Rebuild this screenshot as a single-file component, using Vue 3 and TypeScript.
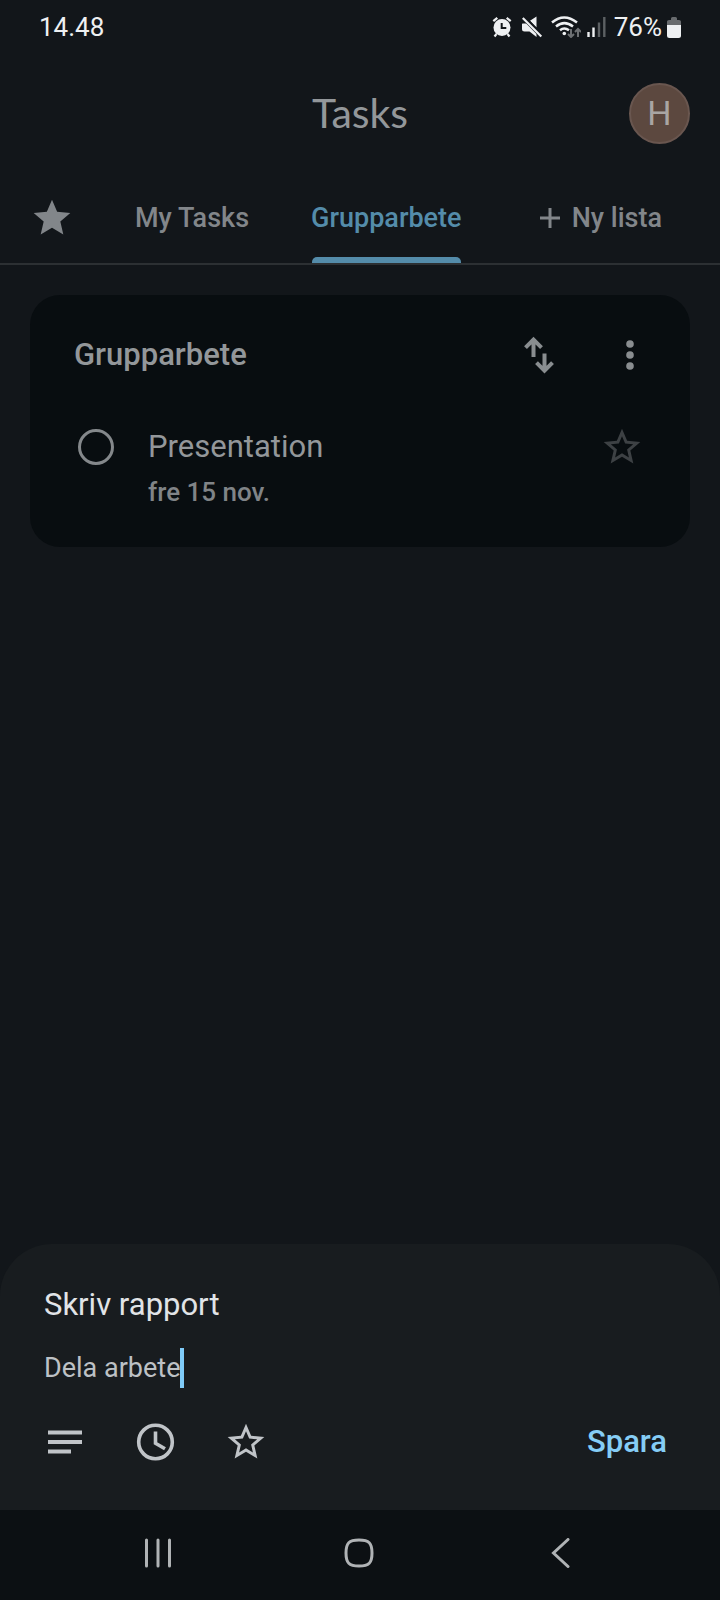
<script setup lang="ts">
import { ref } from 'vue'

interface Task {
  id: number
  title: string
  due: string
  done: boolean
  starred: boolean
}

const lists = ref<string[]>(['My Tasks', 'Grupparbete'])
const activeList = ref<string>('Grupparbete')
const tasks = ref<Task[]>([
  { id: 1, title: 'Presentation', due: 'fre 15 nov.', done: false, starred: false },
])
const newTitle = ref<string>('Skriv rapport')
const newDetails = ref<string>('Dela arbete')

const starPath =
  'M22 9.24l-7.19-.62L12 2 9.19 8.63 2 9.24l5.46 4.73L5.82 21 12 17.27 18.18 21l-1.63-7.03L22 9.24zM12 15.4l-3.76 2.27 1-4.28-3.32-2.88 4.38-.38L12 6.1l1.71 4.04 4.38.38-3.32 2.88 1 4.28L12 15.4z'
</script>

<template>
  <div class="app">
    <div class="status">
      <span>14.48</span>
      <div class="status-icons">
        <svg class="alarm" width="20" height="22" viewBox="0 0 20 22">
          <circle cx="10" cy="11.500" r="8.500" fill="currentColor" />
          <path d="M1.300 5.200 5.300 1.800M18.700 5.200 14.700 1.800M4.500 18 2.500 20.500M15.500 18l2 2.500" stroke="currentColor" stroke-width="2.200" fill="none" />
          <path d="M9.700 7v5h4.600" stroke="#12161a" stroke-width="2" fill="none" />
        </svg>
        <svg class="mute" width="22" height="22" viewBox="0 0 22 22">
          <path d="M1.500 7.500h4L15.500 17v4L8.500 15.500h-5Q1 15.500 1 13V8zM9 4.800 15.500 .5V11.500z" fill="currentColor" />
          <path d="M2.500 1.500 20.500 20" stroke="#12161a" stroke-width="4.500" />
          <path d="M1.800 2 20.300 20.500" stroke="currentColor" stroke-width="2.200" />
        </svg>
        <svg class="wifi" width="30" height="22" viewBox="0 0 30 22">
          <g fill="none" stroke="currentColor" stroke-width="2.500">
            <path d="M1 6.500Q13 -3.500 26 6.500" />
            <path d="M5 10.500Q13.300 3.700 22 10.500" />
            <path d="M9 14.300Q13.300 10.700 18 14.300" />
          </g>
          <circle cx="13.300" cy="17.500" r="1.800" fill="currentColor" />
          <path d="M20 13v8M17 18l3 3 3-3M27 21v-8M24 16l3-3 3 3" stroke="#6d7073" stroke-width="2" fill="none" />
        </svg>
        <svg class="signal" width="19" height="20" viewBox="0 0 19 20">
          <path d="M1.500 15v5M6.500 10.500V20" stroke="currentColor" stroke-width="2.400" />
          <path d="M12 5.500V20M17.300 0v20" stroke="#5c6063" stroke-width="2.400" />
        </svg>
        <span class="percent">76%</span>
        <svg class="battery" width="14" height="21" viewBox="0 0 14 21">
          <path d="M0 8V4.500Q0 3 2 3h2V1.500Q4 0 5.500 0h3Q10 0 10 1.500V3h2q2 0 2 1.500V8z" fill="#686b6e" />
          <path d="M0 8h14v10.500q0 2.500-2.500 2.500h-9Q0 21 0 18.500z" fill="currentColor" />
        </svg>
      </div>
    </div>

    <header class="top">
      <h1>Tasks</h1>
      <button class="avatar" type="button" aria-label="Konto">H</button>
    </header>

    <nav class="tabs" aria-label="Listor">
      <button class="tab star-tab" type="button" aria-label="Stjärnmärkta">
        <svg class="icon" viewBox="0 0 24 24">
          <path d="M12 17.270 18.180 21l-1.640-7.030L22 9.240l-7.190-.610L12 2 9.190 8.630 2 9.240l5.460 4.730L5.820 21z" fill="currentColor" />
        </svg>
      </button>
      <button
        v-for="name in lists"
        :key="name"
        type="button"
        class="tab"
        :class="{ active: name === activeList }"
        @click="activeList = name"
      >
        {{ name }}
      </button>
      <button class="tab new-list" type="button">
        <svg width="20" height="20" viewBox="0 0 20 20">
          <path d="M10 0v20M0 10h20" stroke="currentColor" stroke-width="3" />
        </svg>
        Ny lista
      </button>
    </nav>

    <main>
      <section class="card">
        <div class="card-head">
          <h2>{{ activeList }}</h2>
          <button class="icon-button" type="button" aria-label="Sortera">
            <svg class="icon" viewBox="0 0 44 44">
              <path d="M16.500 24V6.600M8.500 14.600l8-8 8 8M27.500 20.500v17.200M19.500 29.700l8 8 8-8" fill="none" stroke="currentColor" stroke-width="4" />
            </svg>
          </button>
          <button class="icon-button" type="button" aria-label="Fler alternativ">
            <svg class="icon" viewBox="0 0 44 44">
              <g fill="currentColor">
                <circle cx="22" cy="11" r="3.800" />
                <circle cx="22" cy="22" r="3.800" />
                <circle cx="22" cy="33" r="3.800" />
              </g>
            </svg>
          </button>
        </div>
        <ul>
          <li v-for="task in tasks" :key="task.id">
            <input :id="`task-${task.id}`" v-model="task.done" type="checkbox" />
            <div class="task-text">
              <label :for="`task-${task.id}`">{{ task.title }}</label>
              <span class="due">{{ task.due }}</span>
            </div>
            <button class="icon-button dim" type="button" aria-label="Stjärnmärk" @click="task.starred = !task.starred">
              <svg class="icon" viewBox="0 0 24 24"><path :d="starPath" fill="currentColor" /></svg>
            </button>
          </li>
        </ul>
      </section>
    </main>

    <form class="sheet" @submit.prevent>
      <input v-model="newTitle" class="new-title" type="text" aria-label="Ny uppgift" />
      <div class="details">
        <input v-model="newDetails" class="new-details" type="text" aria-label="Information" />
        <span class="caret"></span>
      </div>
      <div class="actions">
        <button class="icon-button" type="button" aria-label="Lägg till information">
          <svg class="icon" viewBox="0 0 44 44">
            <path d="M4 12.500h34M4 22h34M4 31.500h23" stroke="currentColor" stroke-width="4" />
          </svg>
        </button>
        <button class="icon-button" type="button" aria-label="Ange datum och tid">
          <svg class="icon" viewBox="0 0 44 44">
            <g fill="none" stroke="currentColor">
              <circle cx="21.500" cy="22" r="16.800" stroke-width="3.600" />
              <path d="M21.500 11.500v11.800l9.500 5.500" stroke-width="3.600" />
            </g>
          </svg>
        </button>
        <button class="icon-button" type="button" aria-label="Stjärnmärk">
          <svg class="icon" viewBox="0 0 24 24"><path :d="starPath" fill="currentColor" /></svg>
        </button>
        <button class="save" type="submit">Spara</button>
      </div>
    </form>

    <nav class="system" aria-label="System">
      <button type="button" aria-label="Senaste">
        <svg width="30" height="30" viewBox="0 0 30 30">
          <path d="M3.500 2v26M15 2v26M26.500 2v26" />
        </svg>
      </button>
      <button type="button" aria-label="Hem">
        <svg width="30" height="30" viewBox="0 0 30 30">
          <path d="M15 2C25 2 28 5 28 15S25 28 15 28 2 25 2 15 5 2 15 2z" />
        </svg>
      </button>
      <button type="button" aria-label="Tillbaka">
        <svg width="30" height="30" viewBox="0 0 30 30">
          <path d="M23 1.500 8.500 15 23 28.500" />
        </svg>
      </button>
    </nav>
  </div>
</template>

<style>
body {
  margin: 0;
  background: #12161a;
}
</style>

<style scoped>
* {
  box-sizing: border-box;
}
.app {
  min-height: 100vh;
  display: flex;
  flex-direction: column;
  background: #12161a;
  color: #93979a;
  font-family: Roboto, 'Open Sans', sans-serif;
}
button,
input {
  margin: 0;
  padding: 0;
  border: 0;
  background: none;
  color: inherit;
  font: inherit;
  outline: none;
}
svg {
  display: block;
  flex: none;
}
.icon {
  width: 44px;
  height: 44px;
}
.icon-button {
  flex: none;
  color: #898d90;
}

.status {
  display: flex;
  justify-content: space-between;
  height: 54px;
  padding: 0 39px;
  align-items: center;
  color: #eef0f2;
  font-size: 26px;
  line-height: 30px;
}
.status-icons {
  display: flex;
  align-items: center;
}
.mute {
  margin-left: 9px;
}
.wifi {
  margin-left: 8px;
}
.signal {
  margin-left: 6px;
}
.percent {
  margin-left: 8px;
}
.battery {
  margin-left: 5px;
}

.top {
  display: grid;
  grid-template-columns: 1fr auto 1fr;
  align-items: center;
  padding: 20px 30px;
  height: 118px;
}
h1 {
  grid-column: 2;
  margin: 0;
  font-family: Lato, 'Open Sans', sans-serif;
  font-size: 41px;
  line-height: 48px;
  font-weight: 400;
}
.avatar {
  justify-self: end;
  width: 61px;
  height: 61px;
  border: 2px solid #69564f;
  border-radius: 50%;
  background: #5c483f;
  color: #a9a5a3;
  font-size: 34px;
}

.tabs {
  display: flex;
  height: 93px;
  border-bottom: 2px solid #2c3033;
  font-size: 27px;
  font-weight: 500;
  color: #82868a;
}
.tab {
  position: relative;
  padding: 0 31px;
  white-space: nowrap;
}
.star-tab {
  padding: 0 30px;
}
.tab.active {
  color: #548caa;
}
.tab.active::after {
  content: '';
  position: absolute;
  left: 32px;
  right: 32px;
  bottom: 0;
  height: 6px;
  border-radius: 5px 5px 0 0;
  background: #548caa;
}
.new-list {
  display: flex;
  align-items: center;
  gap: 12px;
  margin-left: auto;
  padding: 0 58px 0 0;
}

main {
  flex: 1;
  padding: 30px;
}
.card {
  padding: 38px 38px 32px 44px;
  border-radius: 30px;
  background: #080d10;
}
.card-head {
  display: flex;
  align-items: center;
  gap: 47px;
}
h2 {
  flex: 1;
  margin: 0;
  font-size: 31px;
  line-height: 40px;
  font-weight: 500;
}
ul {
  margin: 48px 0 0;
  padding: 0;
  list-style: none;
}
li {
  display: flex;
  align-items: flex-start;
  gap: 30px;
  padding-right: 8px;
}
input[type='checkbox'] {
  appearance: none;
  flex: none;
  width: 36px;
  height: 36px;
  margin: 4px;
  border: 3px solid #84888b;
  border-radius: 50%;
}
.task-text {
  flex: 1;
  display: flex;
  flex-direction: column;
}
.task-text label {
  font-size: 31px;
  line-height: 44px;
}
.due {
  font-size: 26px;
  line-height: 46px;
  font-weight: 500;
  color: #808487;
}
.dim {
  color: #3d4144;
}

.sheet {
  display: flex;
  flex-direction: column;
  padding: 40px 44px 46px;
  border-radius: 52px 52px 0 0;
  background: #181c1f;
}
.new-title {
  height: 40px;
  font-size: 31px;
  color: #e1e4e7;
}
.details {
  display: flex;
  align-items: center;
  height: 40px;
  margin-top: 24px;
  font-size: 27px;
  color: #bdc1c5;
}
.new-details {
  field-sizing: content;
  height: 40px;
  caret-color: transparent;
}
.caret {
  width: 4px;
  height: 40px;
  background: #7fcbf8;
}
.actions {
  display: flex;
  align-items: center;
  gap: 46px;
  margin-top: 32px;
}
.actions .icon-button {
  color: #c0c4c8;
}
.save {
  margin-left: auto;
  padding-right: 9px;
  font-size: 31px;
  line-height: 40px;
  font-weight: 500;
  color: #85cdf5;
}

.system {
  display: flex;
  height: 90px;
  padding: 0 60px 4px 57px;
  background: #0c1013;
}
.system button {
  flex: 1;
  display: flex;
  align-items: center;
  justify-content: center;
}
.system path {
  fill: none;
  stroke: #b0b3b5;
  stroke-width: 3;
  stroke-linecap: round;
}
</style>
